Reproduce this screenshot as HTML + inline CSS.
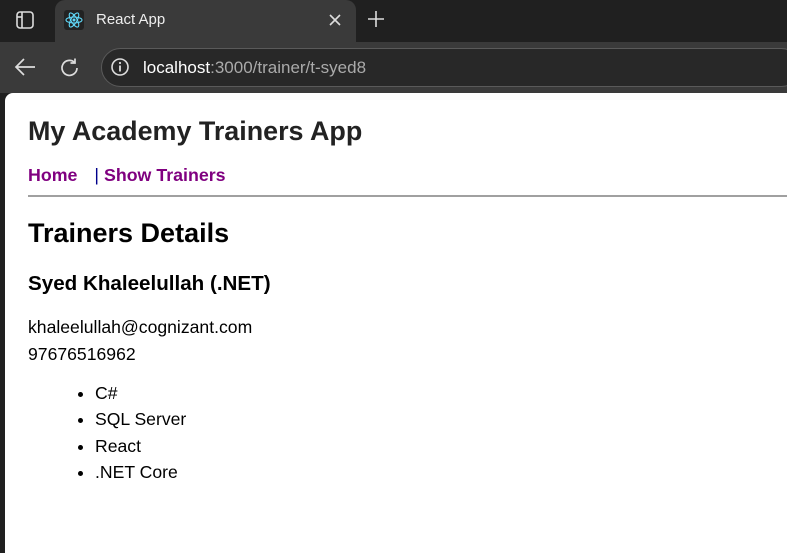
<!DOCTYPE html>
<html><head><style>
*{margin:0;padding:0;box-sizing:border-box}
body{width:787px;height:549px;background:#202020;font-family:"Liberation Sans",Arial,sans-serif;position:relative;overflow:hidden}
.tab{position:absolute;left:55px;top:0;width:301px;height:42px;background:#3a3a3a;border-radius:10px 10px 0 0}
.toolbar{position:absolute;left:0;top:42px;width:787px;height:51px;background:#3a3a3a}
.url{position:absolute;left:101px;top:48px;width:700px;height:39px;border:1px solid #5a5a5a;border-radius:20px;background:#282828}
.page{position:absolute;left:5px;top:93px;width:790px;height:460px;background:#fff;border-radius:8px 0 0 0}
.abs{position:absolute;white-space:nowrap}
h1{position:absolute;left:28px;top:116px;font-size:26.9px;font-weight:bold;color:#222}
.nav{position:absolute;left:28px;top:165px;font-size:17.8px;font-weight:bold;color:#800080}
hr{position:absolute;left:28px;top:195px;width:760px;border:0;border-top:2px solid #a0a0a0}
h2{position:absolute;left:28px;top:218px;font-size:27px;font-weight:bold;color:#000}
h3{position:absolute;left:28px;top:272px;font-size:20.6px;font-weight:bold;color:#000}
.t{position:absolute;left:28px;font-size:17.6px;color:#000}
ul{position:absolute;left:95px;top:380px;font-size:17.6px;line-height:26.3px;color:#000}
</style></head><body>
<svg class="abs" style="left:15px;top:10px" width="20" height="20" viewBox="0 0 20 20"><rect x="2" y="2" width="16" height="16" rx="3" fill="none" stroke="#ddd" stroke-width="1.6"/><line x1="7" y1="2" x2="7" y2="18" stroke="#ddd" stroke-width="1.6"/><line x1="2" y1="7" x2="7" y2="7" stroke="#ddd" stroke-width="1.6"/></svg>
<div class="tab"></div>
<svg class="abs" style="left:64px;top:10px" width="20" height="20" viewBox="0 0 20 20"><rect width="20" height="20" rx="3" fill="#222"/><g fill="none" stroke="#61dafb" stroke-width="1.1"><ellipse cx="10" cy="10" rx="8" ry="3"/><ellipse cx="10" cy="10" rx="8" ry="3" transform="rotate(60 10 10)"/><ellipse cx="10" cy="10" rx="8" ry="3" transform="rotate(120 10 10)"/></g><circle cx="10" cy="10" r="1.5" fill="#61dafb"/></svg>
<div class="abs" style="left:96px;top:11px;font-size:15px;color:#eee">React App</div>
<svg class="abs" style="left:328px;top:13px" width="14" height="14" viewBox="0 0 14 14"><path d="M2 2L12 12M12 2L2 12" stroke="#ddd" stroke-width="1.6"/></svg>
<svg class="abs" style="left:367px;top:10px" width="18" height="18" viewBox="0 0 18 18"><path d="M9 1V17M1 9H17" stroke="#ddd" stroke-width="1.6"/></svg>
<div class="toolbar"></div>
<div class="url"></div>
<svg class="abs" style="left:13px;top:57px" width="24" height="20" viewBox="0 0 24 20"><path d="M22 10H3M11 2L3 10L11 18" fill="none" stroke="#ddd" stroke-width="1.7"/></svg>
<svg class="abs" style="left:59px;top:57px" width="22" height="22" viewBox="0 0 22 22"><path d="M18 11A7.5 7.5 0 1 1 15.5 5.3" fill="none" stroke="#ddd" stroke-width="1.7"/><path d="M16 1.5V6H11.5" fill="none" stroke="#ddd" stroke-width="1.7"/></svg>
<svg class="abs" style="left:110px;top:57px" width="20" height="20" viewBox="0 0 20 20"><circle cx="10" cy="10" r="8" fill="none" stroke="#ddd" stroke-width="1.6"/><rect x="9.1" y="8.5" width="1.8" height="6" fill="#ddd"/><circle cx="10" cy="6" r="1.1" fill="#ddd"/></svg>
<div class="abs" style="left:143px;top:58px;font-size:17px;color:#fff">localhost<span style="color:#aaa">:3000/trainer/t-syed8</span></div>
<div class="page"></div>
<h1>My Academy Trainers App</h1>
<div class="nav">Home<span style="margin-left:17px;color:#00008b;font-weight:normal">|</span> Show Trainers</div>
<hr>
<h2>Trainers Details</h2>
<h3>Syed Khaleelullah (.NET)</h3>
<div class="t" style="top:317px">khaleelullah@cognizant.com</div>
<div class="t" style="top:344px">97676516962</div>
<ul><li>C#</li><li>SQL Server</li><li>React</li><li>.NET Core</li></ul>
</body></html>
